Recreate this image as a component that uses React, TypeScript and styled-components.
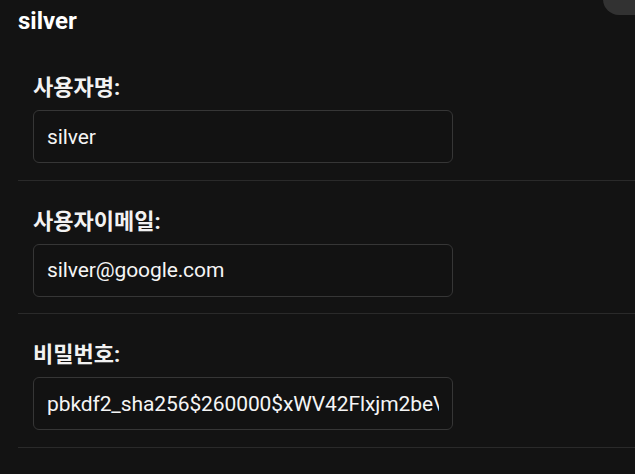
import React from "react";
import styled, { createGlobalStyle } from "styled-components";

const Global = createGlobalStyle`
  html, body {
    margin: 0;
    padding: 0;
    background: #131313;
  }
  body {
    font-family: Roboto, "Noto Sans CJK KR", sans-serif;
    color: #ffffff;
    overflow: hidden;
  }
`;

const Page = styled.div`
  position: relative;
  width: 635px;
  height: 474px;
  padding-left: 18px;
  box-sizing: border-box;
  background: #131313;
  overflow: hidden;
`;

const Title = styled.h1`
  margin: 0;
  padding-top: 7px;
  height: 47px;
  font-family: Roboto, "Noto Sans CJK KR", sans-serif;
  font-size: 24px;
  font-weight: 700;
  line-height: 28px;
  color: #ffffff;
  box-sizing: border-box;
`;

const Pill = styled.div`
  position: absolute;
  top: -20px;
  left: 603px;
  width: 80px;
  height: 35px;
  border-radius: 16px;
  background: #323232;
  color: #ffffff;
  font-family: Roboto, sans-serif;
  font-size: 14px;
  line-height: 14px;
  padding: 8px 0 0 20px;
  box-sizing: border-box;
`;

const Section = styled.section`
  padding: 28px 0 16.5px 15px;
  border-bottom: 1px solid #2a2a2a;
  display: flex;
  flex-direction: column;
  gap: 10px;
`;

const Label = styled.label`
  font-family: Roboto, "Noto Sans CJK KR", sans-serif;
  font-size: 22px;
  font-weight: 700;
  line-height: 25px;
  color: #f2f2f2;
`;

const Field = styled.div`
  width: 420px;
  height: 53px;
  box-sizing: border-box;
  border: 1px solid #363636;
  border-radius: 6px;
  background: #121212;
  padding: 0 13px;
  display: flex;
  align-items: center;
`;

const Value = styled.span`
  flex: 1;
  min-width: 0;
  overflow: hidden;
  white-space: nowrap;
  font-family: Roboto, sans-serif;
  font-size: 21px;
  letter-spacing: -0.1px;
  color: #f5f5f5;
`;

const fields = [
  { label: "사용자명:", value: "silver" },
  { label: "사용자이메일:", value: "silver@google.com" },
  { label: "비밀번호:", value: "pbkdf2_sha256$260000$xWV42Flxjm2beVqR8" },
];

export default function App() {
  return (
    <Page>
      <Global />
      <Pill>...</Pill>
      <Title>silver</Title>
      {fields.map((f) => (
        <Section key={f.label}>
          <Label>{f.label}</Label>
          <Field>
            <Value>{f.value}</Value>
          </Field>
        </Section>
      ))}
    </Page>
  );
}
